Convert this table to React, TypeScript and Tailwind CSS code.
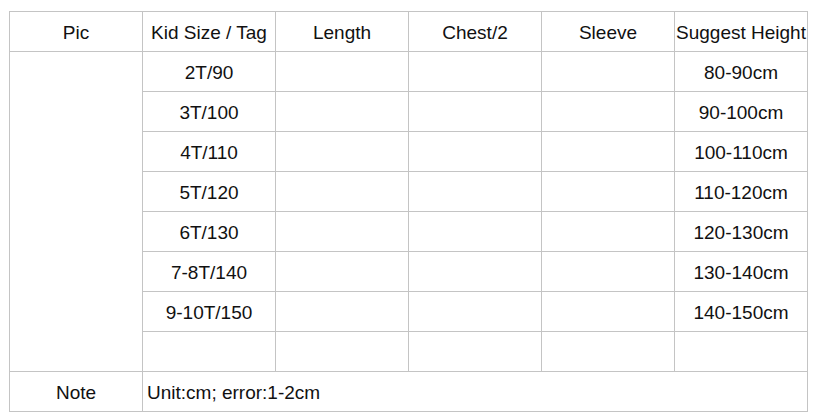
export default function App() {
  const headers = ['Pic', 'Kid Size / Tag', 'Length', 'Chest/2', 'Sleeve', 'Suggest Height'];
  const rows = [
    ['2T/90', '80-90cm'],
    ['3T/100', '90-100cm'],
    ['4T/110', '100-110cm'],
    ['5T/120', '110-120cm'],
    ['6T/130', '120-130cm'],
    ['7-8T/140', '130-140cm'],
    ['9-10T/150', '140-150cm'],
    ['', ''],
  ];

  const cell = 'flex items-center justify-center pt-[3px] border-r border-b border-[#c4c4c4] whitespace-nowrap';

  return (
    <div className="w-[813px] h-[418px] bg-white pt-[11px] pl-[9px] text-[length:19px] text-[#111] font-['Liberation_Sans']">
      <div className="grid w-[799px] grid-cols-[repeat(6,133px)] grid-rows-[repeat(10,40px)] border-l border-t border-[#c4c4c4]">
        {headers.map((h) => (
          <div key={h} className={cell}>{h}</div>
        ))}

        {/* Pic column spans all size rows */}
        <div className="row-span-8 border-r border-b border-[#c4c4c4]" />

        {rows.map(([size, height], i) => (
          <div key={i} className="contents">
            <div className={cell}>{size}</div>
            <div className={cell} />
            <div className={cell} />
            <div className={cell} />
            <div className={cell}>{height}</div>
          </div>
        ))}

        <div className={cell}>Note</div>
        <div className="col-span-5 flex items-center pt-[3px] pl-[4px] border-r border-b border-[#c4c4c4]">
          Unit:cm; error:1-2cm
        </div>
      </div>
    </div>
  );
}
